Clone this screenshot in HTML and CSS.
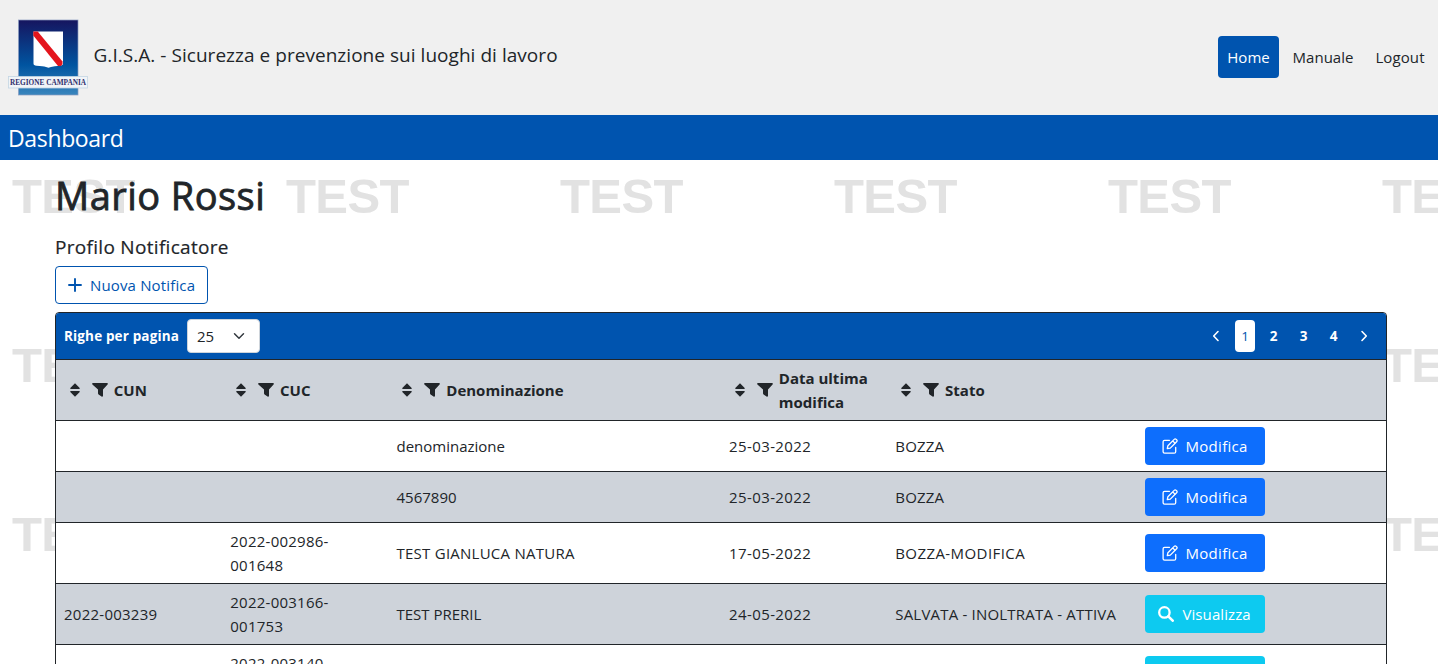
FILE: index.html
```
<!DOCTYPE html>
<html lang="it">
<head>
<meta charset="utf-8">
<title>G.I.S.A. - Dashboard</title>
<link rel="stylesheet" href="styles.css">
</head>
<body>
<svg class="defs" width="0" height="0" aria-hidden="true">
  <symbol id="sort" viewBox="0 0 10 14"><path d="M5 0.200 9.700 5.100Q10 6 9.200 6H.8Q0 6 .3 5.100ZM5 13.800 9.700 8.900Q10 8 9.200 8H.8Q0 8 .3 8.900Z"/></symbol>
  <symbol id="filter" viewBox="0 0 16 16"><path d="M.9 1h14.200q1.200.4.5 1.500L11 7.600V14q-.4 1.100-1.500.6L6.600 12.500Q6 12 6 11.300V7.600L.4 2.500Q-.3 1.400.9 1z"/></symbol>
  <symbol id="edit" viewBox="0 0 16 16"><path d="M7.500 2.300H2.600Q1.100 2.300 1.100 3.800v10Q1.100 15.200 2.600 15.200h9.600q1.500 0 1.500-1.500V9.500M5.300 10.700l.6-3 6.300-6.300q1-1 2.100 0l.3.300q1 1 0 2L8.300 10.100zM10.800 3l2.400 2.400" fill="none" stroke="currentColor" stroke-width="1.300" stroke-linejoin="round" stroke-linecap="round"/></symbol>
  <symbol id="search" viewBox="0 0 16 16"><circle cx="6.400" cy="6.400" r="5.200" fill="none" stroke="currentColor" stroke-width="2.300"/><path d="m10.300 10.300 4.400 4.400" stroke="currentColor" stroke-width="2.600" stroke-linecap="round"/></symbol>
</svg>

<header class="topbar">
  <svg class="logo" width="80" height="78" viewBox="0 0 80 78">
    <defs><linearGradient id="sky" x1="0" y1="0" x2="0" y2="1"><stop offset="0" stop-color="#16155f"/><stop offset=".6" stop-color="#0054a0"/><stop offset="1" stop-color="#3a86bd"/></linearGradient></defs>
    <rect x="10.500" y="1" width="59.500" height="75" fill="url(#sky)" stroke="#8a9cc0" stroke-width=".7"/>
    <path d="M25.500 12.500H55v32q0 2-3 2.200-6 .3-9 1.300l-2.500.7-2.500-.7q-3-1-9.500-1.300-3-.2-3-2.200z" fill="#fff"/>
    <path d="M25.300 12.500h4.400L54.500 42.500v2.500l-1.500 2h-3L25.300 16.500z" fill="#e4151d"/>
    <rect x=".5" y="57.500" width="79" height="11.500" fill="#f1f4f8" stroke="#c3d5e3" stroke-width=".8"/>
    <text class="logo-text" x="2" y="66" textLength="76" lengthAdjust="spacingAndGlyphs">REGIONE CAMPANIA</text>
  </svg>
  <div class="app-title">G.I.S.A. - Sicurezza e prevenzione sui luoghi di lavoro</div>
  <nav class="nav">
    <a class="nav-link active">Home</a>
    <a class="nav-link manual">Manuale</a>
    <a class="nav-link logout">Logout</a>
  </nav>
</header>
<div class="section-bar">Dashboard</div>

<main class="page">
  <div class="watermark" aria-hidden="true">
    <span>TEST</span><span>TEST</span><span>TEST</span><span>TEST</span><span>TEST</span><span>TEST</span>
    <span>TEST</span><span>TEST</span><span>TEST</span><span>TEST</span><span>TEST</span><span>TEST</span>
    <span>TEST</span><span>TEST</span><span>TEST</span><span>TEST</span><span>TEST</span><span>TEST</span>
  </div>
  <div class="content">
    <h1 class="name">Mario Rossi</h1>
    <h2 class="profile">Profilo Notificatore</h2>
    <button class="btn-new"><svg width="14" height="14" viewBox="0 0 14 14"><path d="M7 1v12M1 7h12" stroke="currentColor" stroke-width="1.900" stroke-linecap="round"/></svg><span>Nuova Notifica</span></button>

    <div class="table">
      <div class="toolbar">
        <span class="per-page">Righe per pagina</span>
        <div class="select"><span>25</span><svg width="12" height="12" viewBox="0 0 16 16"><path d="m2 5 6 6 6-6" fill="none" stroke="#343a40" stroke-width="2" stroke-linecap="round" stroke-linejoin="round"/></svg></div>
        <div class="pager">
          <a class="arrow"><svg width="8" height="12" viewBox="0 0 8 12"><path d="M6 1.500 1.700 6 6 10.500" fill="none" stroke="currentColor" stroke-width="1.600" stroke-linecap="round" stroke-linejoin="round"/></svg></a>
          <a class="current">1</a><a class="num">2</a><a class="num">3</a><a class="num">4</a>
          <a class="arrow"><svg width="8" height="12" viewBox="0 0 8 12"><path d="M2 1.500 6.300 6 2 10.500" fill="none" stroke="currentColor" stroke-width="1.600" stroke-linecap="round" stroke-linejoin="round"/></svg></a>
        </div>
      </div>
      <div class="row head">
        <div class="th"><svg class="sort"><use href="#sort"/></svg><svg class="filter"><use href="#filter"/></svg><span>CUN</span></div>
        <div class="th"><svg class="sort"><use href="#sort"/></svg><svg class="filter"><use href="#filter"/></svg><span>CUC</span></div>
        <div class="th"><svg class="sort"><use href="#sort"/></svg><svg class="filter"><use href="#filter"/></svg><span>Denominazione</span></div>
        <div class="th"><svg class="sort"><use href="#sort"/></svg><svg class="filter"><use href="#filter"/></svg><span>Data ultima<br>modifica</span></div>
        <div class="th"><svg class="sort"><use href="#sort"/></svg><svg class="filter"><use href="#filter"/></svg><span>Stato</span></div>
        <div></div>
      </div>
      <div class="row"><div></div><div></div><div>denominazione</div><div class="date">25-03-2022</div><div class="state">BOZZA</div><div><button class="btn edit"><svg><use href="#edit"/></svg><span>Modifica</span></button></div></div>
      <div class="row alt"><div></div><div></div><div>4567890</div><div class="date">25-03-2022</div><div class="state">BOZZA</div><div><button class="btn edit"><svg><use href="#edit"/></svg><span>Modifica</span></button></div></div>
      <div class="row tall"><div></div><div class="code">2022-002986-<br>001648</div><div class="caps">TEST GIANLUCA NATURA</div><div class="date">17-05-2022</div><div class="state hyphenated">BOZZA-MODIFICA</div><div><button class="btn edit"><svg><use href="#edit"/></svg><span>Modifica</span></button></div></div>
      <div class="row tall alt"><div class="code">2022-003239</div><div class="code">2022-003166-<br>001753</div><div>TEST PRERIL</div><div class="date">24-05-2022</div><div class="state">SALVATA - INOLTRATA - ATTIVA</div><div><button class="btn view"><svg><use href="#search"/></svg><span>Visualizza</span></button></div></div>
      <div class="row tall"><div></div><div class="code">2022-003140-<br>001740</div><div></div><div></div><div></div><div><button class="btn view"><svg><use href="#search"/></svg><span>Visualizza</span></button></div></div>
    </div>
  </div>
</main>
</body>
</html>
```
FILE: styles.css
```
* { box-sizing: border-box; }
body {
  margin: 0;
  height: 664px;
  overflow: hidden;
  background: #fff;
  color: #212529;
  font: 15px/24px "Open Sans", "Noto Sans", sans-serif;
}
.defs { position: absolute; }
h1, h2 { margin: 0; font-weight: 500; }
button { font: inherit; cursor: pointer; }
svg { display: block; flex: none; fill: currentColor; }

.topbar {
  display: flex;
  align-items: center;
  height: 115px;
  padding: 0 0 0 8px;
  background: #f0f0f0;
}
.logo { margin-top: 1px; }
.logo-text { font: bold 8.5px "Liberation Serif", serif; fill: #30306d; }
.app-title { margin: 0 auto 5px 5.5px; font-size: 19px; line-height: 30px; letter-spacing: .04px; }
.nav { display: flex; margin-bottom: 2px; }
.nav-link { height: 42px; line-height: 43px; text-align: center; border-radius: 4px; }
.nav-link.active { width: 61px; margin-right: 9px; background: #0054af; color: #fff; }
.nav-link.manual { width: 70px; }
.nav-link.logout { width: 80px; padding-left: 4px; letter-spacing: .1px; }

.section-bar {
  height: 45px;
  padding-left: 8px;
  background: #0054af;
  color: #fff;
  font-size: 23px;
  line-height: 47px;
  letter-spacing: -.35px;
}

.page { position: relative; height: 504px; overflow: hidden; }
.watermark {
  position: absolute;
  top: 0;
  left: 12px;
  display: grid;
  grid-template-columns: repeat(6, 274px);
  grid-auto-rows: 169px;
  color: #e2e2e2;
  font: bold 49px/73px "Liberation Sans", Arial, sans-serif;
  letter-spacing: -.6px;
}
.content { position: relative; padding: 12px 51px 0 55px; }
.name { font-size: 38px; line-height: 46px; letter-spacing: .45px; -webkit-text-stroke: .8px currentColor; }
.profile { margin-top: 17px; font-size: 19px; line-height: 24px; letter-spacing: .3px; -webkit-text-stroke: .2px currentColor; }
.btn-new {
  display: flex;
  align-items: center;
  gap: 8px;
  width: 153px;
  height: 38px;
  margin: 7px 0 8px;
  padding: 0 12px;
  border: 1px solid #0054af;
  border-radius: 4px;
  background: #fff;
  color: #0054af;
  letter-spacing: .15px;
  white-space: nowrap;
}

.table { border: 1px solid #212529; border-radius: 4px 4px 0 0; background: #fff; overflow: hidden; }
.toolbar {
  display: flex;
  align-items: center;
  height: 47px;
  padding: 0 8px;
  border-bottom: 1px solid #212529;
  background: #0054af;
  color: #fff;
}
.per-page { width: 123px; font-size: 13.5px; font-weight: 700; letter-spacing: .15px; white-space: nowrap; }
.select {
  display: flex;
  align-items: center;
  justify-content: space-between;
  width: 73px;
  height: 34px;
  padding: 0 14px 0 9px;
  border: 1px solid #ced4da;
  border-radius: 4px;
  background: #fff;
  color: #212529;
}
.pager { display: flex; gap: 10px; margin-left: auto; padding-right: 5px; font-size: 13.5px; font-weight: 700; }
.pager a { display: flex; align-items: center; justify-content: center; width: 20px; height: 32px; border-radius: 4px; }
.pager .arrow { width: 18px; }
.pager .num { padding-right: 3px; }
.pager .current { background: #fff; color: #0054af; font-weight: 500; }

.row {
  display: grid;
  grid-template-columns: 2fr 2fr 4fr 2fr 3fr 3fr;
  align-items: center;
  height: 51px;
  border-bottom: 1px solid #212529;
}
.row > div { padding: 0 8px; white-space: nowrap; }
.row.tall, .row.head { height: 61px; }
.row.alt, .row.head { background: #ced3da; }
.row > .th { display: flex; align-items: center; padding-left: 13.8px; font-weight: 700; }
.date { letter-spacing: .4px; }
.code { letter-spacing: .25px; }
.caps { letter-spacing: .25px; }
.state { letter-spacing: .2px; }
.state.hyphenated { letter-spacing: .42px; }
.sort { width: 10px; height: 14px; margin-right: 12px; }
.filter { width: 16px; height: 16px; margin-right: 6px; }

.btn {
  display: flex;
  align-items: center;
  justify-content: center;
  gap: 8px;
  width: 120px;
  height: 38px;
  padding: 0;
  border: 0;
  border-radius: 4px;
  color: #fff;
}
.btn svg { width: 16px; height: 16px; }
.btn.edit { background: #0d6efd; letter-spacing: .3px; }
.btn.view { background: #0dcaf0; letter-spacing: .1px; }
```
